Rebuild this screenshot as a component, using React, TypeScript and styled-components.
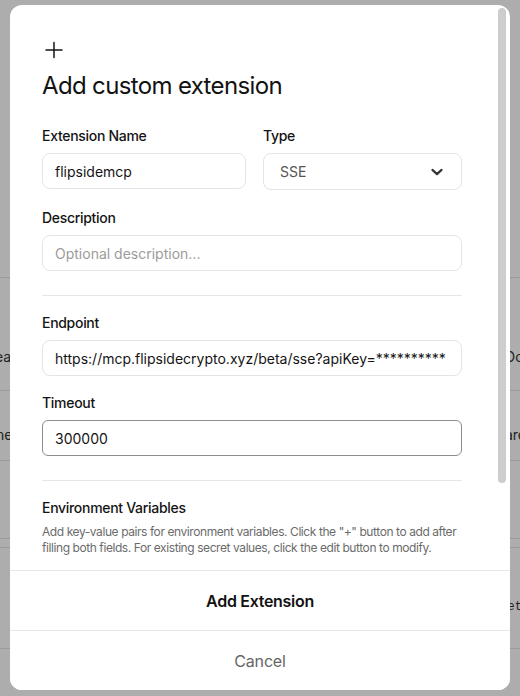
import React from "react";
import styled, { createGlobalStyle } from "styled-components";

const GlobalStyle = createGlobalStyle`
  html, body { margin: 0; padding: 0; }
  body {
    width: 520px;
    height: 696px;
    overflow: hidden;
    font-family: Inter, "Noto Sans", "Liberation Sans", sans-serif;
    -webkit-font-smoothing: antialiased;
  }
  * { box-sizing: border-box; }
`;

/* ---------- background page (behind the overlay) ---------- */

const Page = styled.div`
  width: 520px;
  height: 696px;
  background: #ffffff;
  display: flex;
  flex-direction: column;
  overflow: hidden;
`;

const BgRow = styled.div<{ $h: number; $pt?: number; $line?: boolean }>`
  height: ${(p) => p.$h}px;
  flex: none;
  padding-top: ${(p) => p.$pt ?? 0}px;
  border-bottom: ${(p) => (p.$line ? "1px solid #e3e3e3" : "none")};
  display: flex;
  justify-content: space-between;
  align-items: flex-start;
`;

const BgText = styled.span<{ $mono?: boolean; $side: "l" | "r"; $shift: number }>`
  font-family: ${(p) =>
    p.$mono ? '"Liberation Mono", "DejaVu Sans Mono", monospace' : 'Inter, "Liberation Sans", sans-serif'};
  font-size: ${(p) => (p.$mono ? 12 : 14)}px;
  line-height: 20px;
  color: #333;
  white-space: nowrap;
  margin-left: ${(p) => (p.$side === "l" ? `${p.$shift}px` : "auto")};
  margin-right: ${(p) => (p.$side === "r" ? `${p.$shift}px` : "0")};
`;

/* ---------- overlay + modal ---------- */

const Overlay = styled.div`
  position: fixed;
  inset: 0;
  background: rgba(0, 0, 0, 0.32);
`;

const Modal = styled.div`
  position: fixed;
  left: 10px;
  top: 5px;
  width: 500px;
  height: 685px;
  background: #ffffff;
  border-radius: 12px;
  display: flex;
  flex-direction: column;
  overflow: hidden;
`;

const ScrollBody = styled.div`
  flex: 1;
  min-height: 0;
  overflow: hidden;
  padding: 33px 48px 0 32px;
`;

const ScrollThumb = styled.div`
  position: absolute;
  top: 3px;
  right: 4px;
  width: 8px;
  height: 475px;
  border-radius: 4px;
  background: #cdcdcd;
`;

const PlusIcon = styled.svg`
  display: block;
  width: 24px;
  height: 24px;
  margin-bottom: 8px;
`;

const Title = styled.h2`
  margin: 0 0 24px;
  font-size: 24px;
  line-height: 32px;
  font-weight: 400;
  color: #121212;
  letter-spacing: -0.65px;
`;

const Grid = styled.div`
  display: grid;
  grid-template-columns: 204px 1fr;
  column-gap: 17px;
`;

const Stack = styled.div<{ $gap: number }>`
  display: flex;
  flex-direction: column;
  gap: ${(p) => p.$gap}px;
`;

const Field = styled.div`
  display: flex;
  flex-direction: column;
  gap: 7px;
`;

const Label = styled.label`
  font-size: 14px;
  line-height: 20px;
  font-weight: 500;
  color: #141414;
  letter-spacing: -0.3px;
`;

const Input = styled.input<{ $strong?: boolean }>`
  height: 36px;
  width: 100%;
  border: 1px solid ${(p) => (p.$strong ? "#8c8c8c" : "#e4e4e4")};
  border-radius: ${(p) => (p.$strong ? "6px" : "8px")};
  padding: 0 12px;
  font-family: inherit;
  font-size: 14px;
  color: #141414;
  background: #fff;
  outline: none;

  &::placeholder {
    color: #9b9b9b;
  }
`;

const Select = styled.div`
  height: 37px;
  border: 1px solid #e4e4e4;
  border-radius: 8px;
  padding: 0 14px 0 16px;
  display: flex;
  align-items: center;
  justify-content: space-between;
  font-size: 14px;
  color: #555;
`;

const Divider = styled.hr<{ $top: number; $bottom: number }>`
  border: none;
  border-top: 1px solid #e6e6e6;
  margin: ${(p) => p.$top}px 0 ${(p) => p.$bottom}px;
`;

const SectionTitle = styled.div`
  font-size: 14px;
  line-height: 20px;
  font-weight: 500;
  color: #141414;
  letter-spacing: -0.3px;
`;

const Help = styled.p`
  margin: 6px 0 0;
  font-size: 12px;
  line-height: 16px;
  color: #6b6b6b;
  letter-spacing: -0.42px;
`;

const EnvRow = styled.div`
  margin-top: 16px;
  display: grid;
  grid-template-columns: 1fr 1fr 36px;
  gap: 8px;
`;

const IconButton = styled.button`
  height: 36px;
  border: 1px solid #e4e4e4;
  border-radius: 8px;
  background: #fff;
  display: flex;
  align-items: center;
  justify-content: center;
  padding: 0;
`;

const Footer = styled.div`
  flex: none;
  display: flex;
  flex-direction: column;
`;

const FooterButton = styled.button<{ $primary?: boolean }>`
  height: 60px;
  border: none;
  border-top: 1px solid #e8e8e8;
  background: #fff;
  font-family: inherit;
  font-size: 16px;
  font-weight: ${(p) => (p.$primary ? 600 : 400)};
  color: ${(p) => (p.$primary ? "#121212" : "#666666")};
  letter-spacing: ${(p) => (p.$primary ? "-0.3px" : "-0.15px")};
  cursor: pointer;
`;

export default function App() {
  return (
    <>
      <GlobalStyle />
      <Page>
        <BgRow $h={278} $line />
        <BgRow $h={113} $pt={69} $line>
          <BgText $side="l" $shift={-5}>ear</BgText>
          <BgText $side="r" $shift={-19}>Docs</BgText>
        </BgRow>
        <BgRow $h={70} $pt={34} $line>
          <BgText $side="l" $shift={-4}>ne</BgText>
          <BgText $side="r" $shift={-6}>are</BgText>
        </BgRow>
        <BgRow $h={78} $line />
        <BgRow $h={9} $line />
        <BgRow $h={101} $pt={49} $line>
          <span />
          <BgText $side="r" $shift={-2} $mono>
            et
          </BgText>
        </BgRow>
      </Page>
      <Overlay />
      <Modal>
        <ScrollBody>
          <PlusIcon viewBox="0 0 24 24" fill="none" stroke="#151515" strokeWidth="1.5" strokeLinecap="round">
            <path d="M12 4.5v15M4 12h16" />
          </PlusIcon>
          <Title>Add custom extension</Title>

          <Stack $gap={18}>
            <Grid>
              <Field>
                <Label>Extension Name</Label>
                <Input defaultValue="flipsidemcp" />
              </Field>
              <Field>
                <Label>Type</Label>
                <Select>
                  <span>SSE</span>
                  <svg width="20" height="20" viewBox="0 0 24 24" fill="none" stroke="#333" strokeWidth="2.6" strokeLinecap="round" strokeLinejoin="round">
                    <path d="M6.5 9.5l5.5 5 5.5-5" />
                  </svg>
                </Select>
              </Field>
            </Grid>
            <Field>
              <Label>Description</Label>
              <Input placeholder="Optional description..." />
            </Field>
          </Stack>

          <Divider $top={24} $bottom={17} />

          <Stack $gap={17}>
            <Field>
              <Label>Endpoint</Label>
              <Input defaultValue="https://mcp.flipsidecrypto.xyz/beta/sse?apiKey=**********" />
            </Field>
            <Field>
              <Label>Timeout</Label>
              <Input $strong defaultValue="300000" />
            </Field>
          </Stack>

          <Divider $top={24} $bottom={17} />

          <SectionTitle>Environment Variables</SectionTitle>
          <Help>
            Add key-value pairs for environment variables. Click the "+" button to add after filling both fields. For
            existing secret values, click the edit button to modify.
          </Help>
          <EnvRow>
            <Input placeholder="Variable name" />
            <Input placeholder="Value" />
            <IconButton aria-label="add">
              <svg width="16" height="16" viewBox="0 0 24 24" fill="none" stroke="#333" strokeWidth="2" strokeLinecap="round">
                <path d="M12 5v14M5 12h14" />
              </svg>
            </IconButton>
          </EnvRow>
        </ScrollBody>
        <ScrollThumb />
        <Footer>
          <FooterButton $primary>Add Extension</FooterButton>
          <FooterButton>Cancel</FooterButton>
        </Footer>
      </Modal>
    </>
  );
}
